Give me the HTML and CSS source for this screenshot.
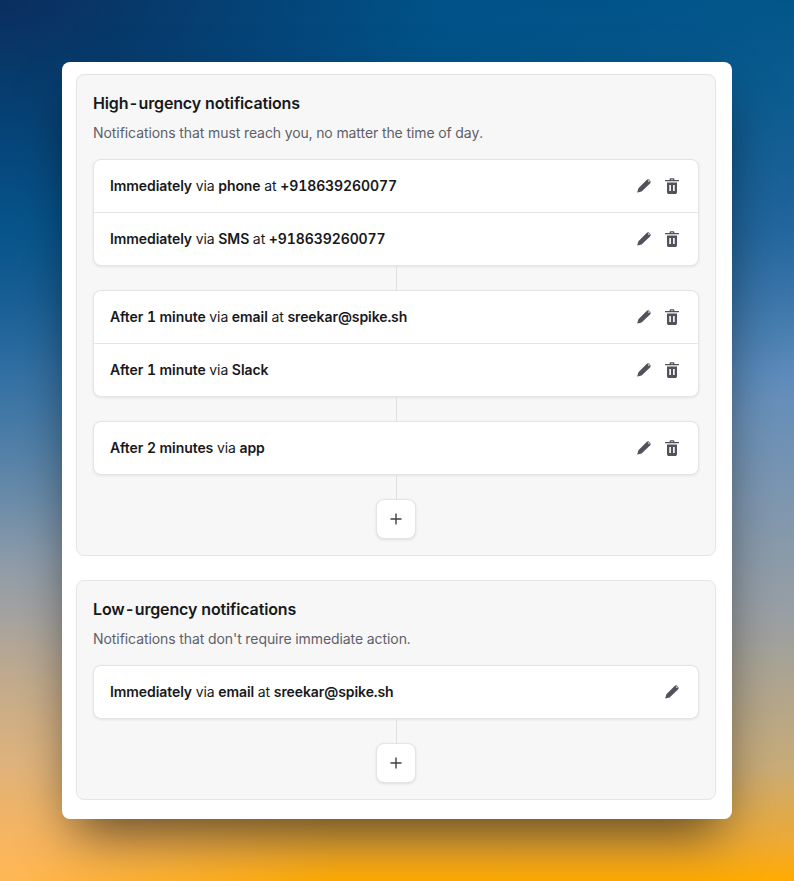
FILE: index.html
```html
<!DOCTYPE html>
<html lang="en">
<head>
<meta charset="utf-8">
<title>Notification rules</title>
<link rel="stylesheet" href="styles.css">
</head>
<body>
<svg class="defs" width="0" height="0" aria-hidden="true">
  <symbol id="pen" viewBox="0 0 16 16"><path d="M1.700 14.400c-.3.1-.5-.1-.4-.4l1.100-3.700L10.600 2.100a2.100 2.100 0 0 1 3 0l.4.4a2.100 2.100 0 0 1 0 3L5.600 13.500z" fill="currentColor"/><circle cx="12.900" cy="3.100" r=".8" fill="#fff"/></symbol>
  <symbol id="trash" viewBox="0 0 16 16"><path d="M5.600 2V1.500C5.600.8 6.100.300 6.800.300h2.400c.7 0 1.200.5 1.200 1.200V2H15v1.300H1V2zM6.900 1.400V2h2.200v-.6z" fill="currentColor"/><path d="M3 4.400h10v9.800c0 1-.8 1.800-1.800 1.800H4.800C3.800 16 3 15.200 3 14.200zM5.300 7v6h1.600V7zm3.800 0v6h1.600V7z" fill="currentColor" fill-rule="evenodd"/></symbol>
</svg>
<main class="panel">
  <section class="section">
    <h2 class="title">High<span class="dash">-</span>urgency notifications</h2>
    <p class="desc">Notifications that must reach you, no matter the time of day.</p>
    <div class="group">
      <div class="row"><p class="rule"><b>Immediately</b> via <b>phone</b> at <b>+918639260077</b></p><div class="actions"><svg class="icon"><use href="#pen"/></svg><svg class="icon"><use href="#trash"/></svg></div></div>
      <div class="row"><p class="rule"><b>Immediately</b> via <b>SMS</b> at <b>+918639260077</b></p><div class="actions"><svg class="icon"><use href="#pen"/></svg><svg class="icon"><use href="#trash"/></svg></div></div>
    </div>
    <div class="line"></div>
    <div class="group">
      <div class="row"><p class="rule"><b>After 1 minute</b> via <b>email</b> at <b>sreekar@spike.sh</b></p><div class="actions"><svg class="icon"><use href="#pen"/></svg><svg class="icon"><use href="#trash"/></svg></div></div>
      <div class="row"><p class="rule"><b>After 1 minute</b> via <b>Slack</b></p><div class="actions"><svg class="icon"><use href="#pen"/></svg><svg class="icon"><use href="#trash"/></svg></div></div>
    </div>
    <div class="line"></div>
    <div class="group">
      <div class="row"><p class="rule"><b>After 2 minutes</b> via <b>app</b></p><div class="actions"><svg class="icon"><use href="#pen"/></svg><svg class="icon"><use href="#trash"/></svg></div></div>
    </div>
    <div class="line"></div>
    <button class="add" type="button" aria-label="Add"><svg viewBox="0 0 12 12" width="12" height="12"><path d="M6 .5v11M.5 6h11" stroke="currentColor" stroke-width="1.400" fill="none"/></svg></button>
  </section>
  <section class="section">
    <h2 class="title">Low<span class="dash">-</span>urgency notifications</h2>
    <p class="desc">Notifications that don't require immediate action.</p>
    <div class="group">
      <div class="row"><p class="rule"><b>Immediately</b> via <b>email</b> at <b>sreekar@spike.sh</b></p><div class="actions"><svg class="icon"><use href="#pen"/></svg></div></div>
    </div>
    <div class="line"></div>
    <button class="add" type="button" aria-label="Add"><svg viewBox="0 0 12 12" width="12" height="12"><path d="M6 .5v11M.5 6h11" stroke="currentColor" stroke-width="1.400" fill="none"/></svg></button>
  </section>
</main>
</body>
</html>
```
FILE: styles.css
```css
* { box-sizing: border-box; }
html, body { height: 100%; }
body {
  margin: 0;
  padding: 62px;
  overflow: hidden;
  font-family: Inter, "Liberation Sans", sans-serif;
  font-feature-settings: "tnum";
  color: #18181b;
  background:
    radial-gradient(ellipse 1100px 560px at 0 0, #0a2e5e 0%, rgba(0, 80, 135, .85) 40%, rgba(0, 80, 135, 0) 100%),
    radial-gradient(ellipse 340px 320px at 0 100%, rgba(255, 190, 130, .65) 0%, rgba(255, 190, 130, 0) 100%),
    linear-gradient(180deg, #005a8c 0%, #2f6ea5 26%, #5f8dbd 42%, #9aa0a4 70%, #c9ac78 87%, #f0aa30 96%, #ffab00 100%);
}
.defs { position: absolute; }
.panel {
  width: 670px;
  height: 757px;
  padding: 12px 16px 19px 14px;
  background: #fff;
  border-radius: 8px;
  box-shadow: 0 25px 50px -12px rgba(0, 0, 0, .6);
  display: flex;
  flex-direction: column;
  gap: 24px;
}
.section {
  width: 640px;
  padding: 16px;
  background: #f7f7f7;
  border: 1px solid #e4e4e7;
  border-radius: 8px;
  display: flex;
  flex-direction: column;
}
.title {
  margin: 0 0 8px;
  font-size: 16px;
  line-height: 24px;
  font-weight: 600;
  letter-spacing: -.15px;
}
.dash { margin: 0; }
.desc {
  margin: 0 0 16px;
  font-size: 14px;
  line-height: 20px;
  letter-spacing: -.07px;
  color: #5f5f68;
}
.group {
  background: #fff;
  border: 1px solid #e4e4e7;
  border-radius: 8px;
  box-shadow: 0 1px 3px rgba(0, 0, 0, .08);
}
.row {
  height: 52px;
  padding: 0 18px 0 16px;
  display: flex;
  align-items: center;
  justify-content: space-between;
}
.row + .row { height: 53px; border-top: 1px solid #e4e4e7; }
.rule { margin: 0; font-size: 14px; line-height: 20px; letter-spacing: -.08px; }
.rule b { font-weight: 600; }
.actions { display: flex; gap: 12px; color: #52525b; }
.icon { width: 16px; height: 16px; display: block; }
.line { width: 1px; height: 24px; background: #e0e0e3; align-self: center; }
.add {
  width: 40px;
  height: 40px;
  padding: 0;
  align-self: center;
  display: flex;
  align-items: center;
  justify-content: center;
  color: #3f3f46;
  background: #fff;
  border: 1px solid #e4e4e7;
  border-radius: 8px;
  box-shadow: 0 1px 3px rgba(0, 0, 0, .1);
}
```
